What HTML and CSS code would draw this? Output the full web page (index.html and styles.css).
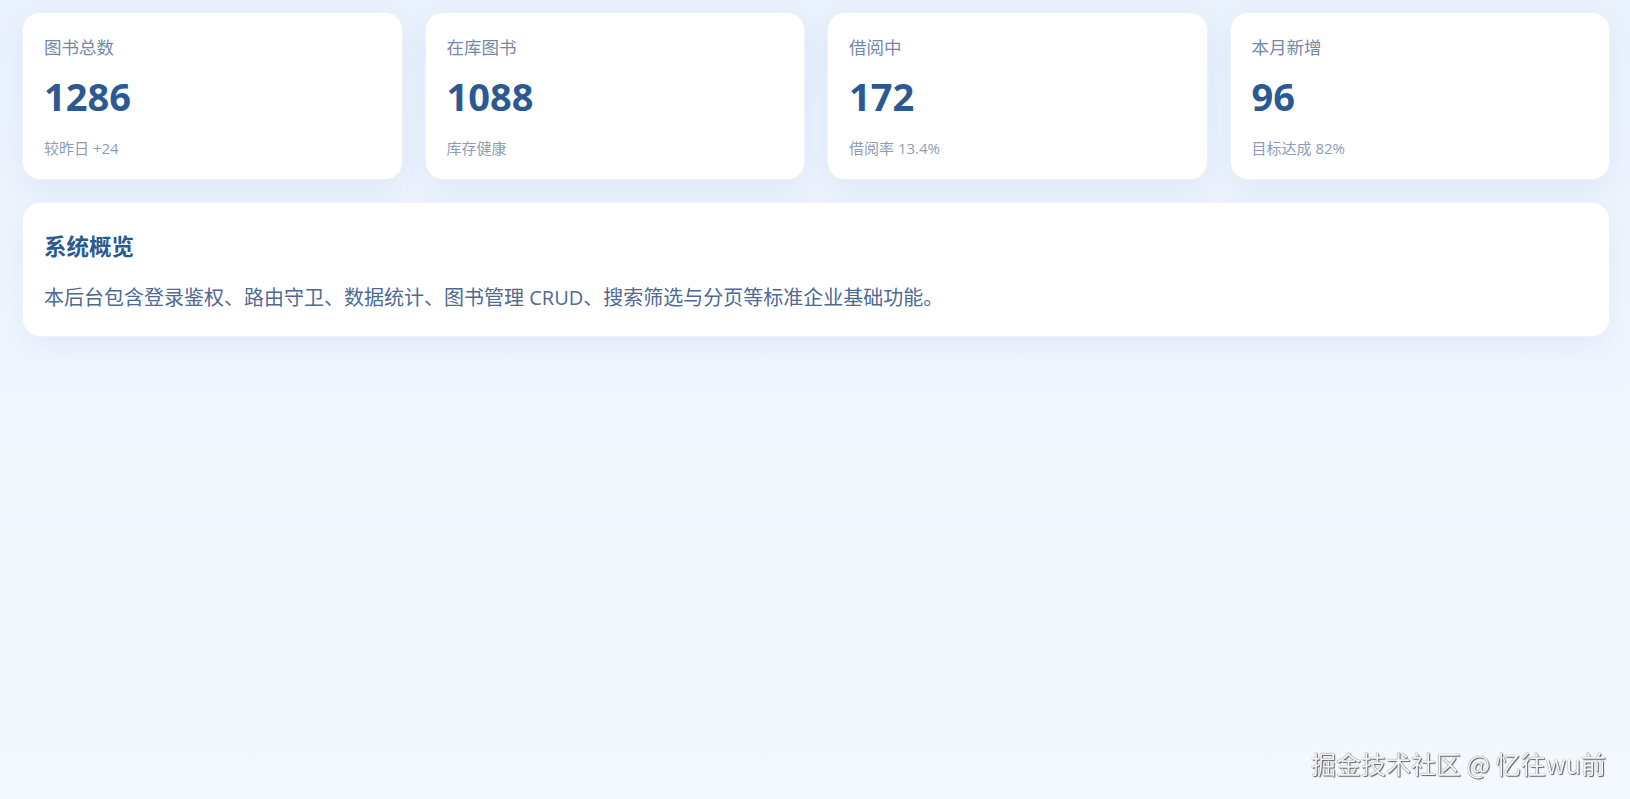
FILE: index.html
```html
<!DOCTYPE html>
<html>
  <head>
    <meta charset="utf-8">
    <title>图书管理后台 - 首页</title>

    <link rel="stylesheet" href="styles.css">
  </head>

  <body>
    <div id="dashboard">
      <div class="statRow">
        <div class="statCard">
          <p class="statLabel">图书总数</p>
          <p class="statValue">1286</p>
          <p class="statNote">较昨日 +24</p>
        </div>

        <div class="statCard">
          <p class="statLabel">在库图书</p>
          <p class="statValue">1088</p>
          <p class="statNote">库存健康</p>
        </div>

        <div class="statCard">
          <p class="statLabel">借阅中</p>
          <p class="statValue">172</p>
          <p class="statNote">借阅率 13.4%</p>
        </div>

        <div class="statCard">
          <p class="statLabel">本月新增</p>
          <p class="statValue">96</p>
          <p class="statNote">目标达成 82%</p>
        </div>
      </div>

      <div class="panel">
        <h3 class="panelTitle">系统概览</h3>
        <p class="panelText">本后台包含登录鉴权、路由守卫、数据统计、图书管理 CRUD、搜索筛选与分页等标准企业基础功能。</p>
      </div>
    </div>

    <div class="watermark">掘金技术社区 @ 忆往wu前</div>
  </body>
</html>
```

FILE: styles.css
```css
html,
body {
  height: 100%;
}

body {
  margin: 0px;
  font-family: "Open Sans", "Noto Sans CJK SC", sans-serif;
  background: linear-gradient(180deg, #e9f1fc 0px, #f1f6fe 360px, #f4f8ff 100%);
}

#dashboard {
  padding: 12px 20px 0 22px;
  display: flex;
  flex-direction: column;
  gap: 22px;
}

.statRow {
  display: grid;
  grid-template-columns: repeat(4, 1fr);
  gap: 22px;
}

.statCard,
.panel {
  background-color: #ffffff;
  border: 1px solid #eef3fb;
  border-radius: 18px;
  box-shadow: 0 12px 30px rgba(64, 110, 190, 0.08);
}

.statCard {
  height: 168px;
  box-sizing: border-box;
  padding: 21px 21px 0;
}

.statCard p {
  margin: 0;
}

.statLabel {
  font-size: 17.5px;
  line-height: 26px;
  color: #7688a8;
}

.statValue {
  margin-top: 12px !important;
  font-size: 38px;
  font-weight: 700;
  line-height: 48px;
  color: #2b5a93;
}

.statNote {
  margin-top: 17px !important;
  font-size: 15px;
  line-height: 22px;
  color: #8d9cba;
}

.panel {
  height: 135px;
  box-sizing: border-box;
  padding: 28px 21px 0;
}

.panelTitle {
  margin: 0;
  font-size: 22.5px;
  font-weight: 700;
  line-height: 31px;
  color: #2c5a8f;
}

.panelText {
  margin: 21px 0 0;
  font-size: 20px;
  line-height: 30px;
  color: #4f6a92;
}

/* site stamp in the corner */
.watermark {
  position: fixed;
  right: 24px;
  bottom: 20px;
  font-family: "Noto Sans CJK SC", "Open Sans", sans-serif;
  font-size: 25px;
  line-height: 32px;
  color: #f6f6f6;
  text-shadow: 0 0 1px #444, 1px 1px 1px #666;
}
```
